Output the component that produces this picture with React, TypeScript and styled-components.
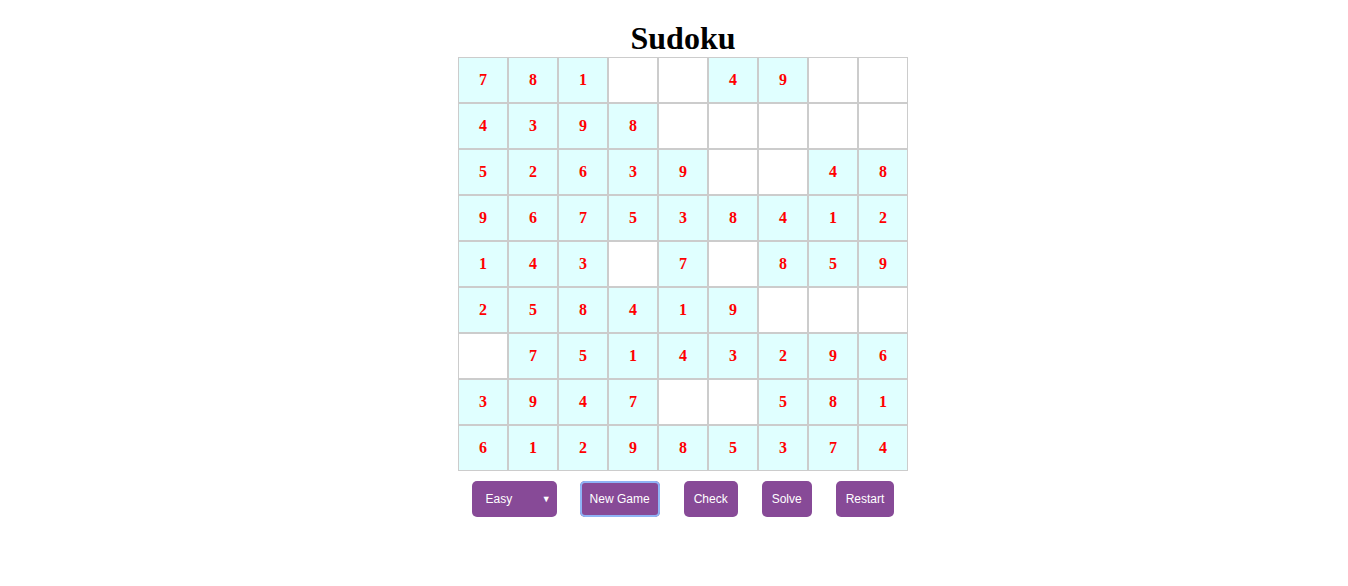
import React from "react";
import styled, { createGlobalStyle } from "styled-components";

const GlobalStyle = createGlobalStyle`
  body {
    margin: 0;
    background: #ffffff;
    font-family: "Liberation Serif", "Times New Roman", serif;
  }
`;

const Page = styled.div`
  display: flex;
  flex-direction: column;
  align-items: center;
  padding: 19px 0 0 18px;
`;

const Title = styled.h1`
  margin: 0;
  font-family: "Liberation Serif", "Times New Roman", serif;
  font-size: 32px;
  font-weight: bold;
  color: #000;
  line-height: 38px;
`;

const Board = styled.div`
  display: grid;
  grid-template-columns: repeat(9, 50px);
  grid-auto-rows: 46px;
`;

const Cell = styled.div<{ filled: boolean }>`
  box-sizing: border-box;
  display: flex;
  align-items: center;
  justify-content: center;
  border: 1px solid #cccccc;
  background: ${(props) => (props.filled ? "#e0ffff" : "#ffffff")};
  color: #ff0000;
  font-family: "Liberation Serif", "Times New Roman", serif;
  font-weight: bold;
  font-size: 16px;
`;

const Controls = styled.div`
  display: flex;
  align-items: center;
  margin-top: 10px;
`;

const Button = styled.button<{ focused?: boolean }>`
  box-sizing: border-box;
  height: 36px;
  margin: 0 12px;
  padding: 0 10px;
  border: none;
  border-radius: 5px;
  background: #874a97;
  box-shadow: ${(props) => (props.focused ? "inset 0 0 0 2px #8fb4f5" : "none")};
  color: #ffffff;
  font-family: "Liberation Sans", Arial, sans-serif;
  font-size: 12px;
  cursor: pointer;
`;

const SelectBox = styled.label`
  box-sizing: border-box;
  display: flex;
  align-items: center;
  width: 85px;
  height: 36px;
  margin: 0 11px 0 12px;
  padding: 0 6px 0 0;
  border-radius: 5px;
  background: #874a97;
  color: #ffffff;
  font-family: "Liberation Sans", Arial, sans-serif;
  font-size: 12px;
`;

const Select = styled.select`
  flex: 1;
  appearance: none;
  min-width: 0;
  height: 100%;
  padding: 0 0 0 14px;
  border: none;
  outline: none;
  background: transparent;
  color: #ffffff;
  font-family: inherit;
  font-size: 12px;

  option {
    color: #000;
  }
`;

const Arrow = styled.span`
  font-size: 9px;
  line-height: 1;
`;

const puzzle = [
  "781..49..",
  "4398.....",
  "52639..48",
  "967538412",
  "143.7.859",
  "258419...",
  ".75143296",
  "3947..581",
  "612985374",
];

export default function App() {
  return (
    <>
      <GlobalStyle />
      <Page>
        <Title>Sudoku</Title>
        <Board>
          {puzzle.map((row, r) =>
            row.split("").map((ch, c) => (
              <Cell key={`${r}-${c}`} filled={ch !== "."}>
                {ch !== "." ? ch : ""}
              </Cell>
            ))
          )}
        </Board>
        <Controls>
          <SelectBox>
            <Select defaultValue="easy">
              <option value="easy">Easy</option>
              <option value="medium">Medium</option>
              <option value="hard">Hard</option>
            </Select>
            <Arrow>▼</Arrow>
          </SelectBox>
          <Button focused>New Game</Button>
          <Button>Check</Button>
          <Button>Solve</Button>
          <Button>Restart</Button>
        </Controls>
      </Page>
    </>
  );
}
